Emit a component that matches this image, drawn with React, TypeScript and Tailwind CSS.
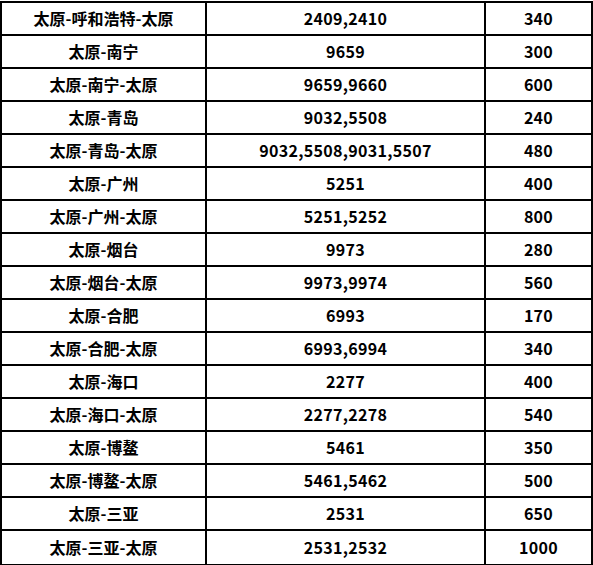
const rows: [string, string, string][] = [
  ["太原-呼和浩特-太原", "2409,2410", "340"],
  ["太原-南宁", "9659", "300"],
  ["太原-南宁-太原", "9659,9660", "600"],
  ["太原-青岛", "9032,5508", "240"],
  ["太原-青岛-太原", "9032,5508,9031,5507", "480"],
  ["太原-广州", "5251", "400"],
  ["太原-广州-太原", "5251,5252", "800"],
  ["太原-烟台", "9973", "280"],
  ["太原-烟台-太原", "9973,9974", "560"],
  ["太原-合肥", "6993", "170"],
  ["太原-合肥-太原", "6993,6994", "340"],
  ["太原-海口", "2277", "400"],
  ["太原-海口-太原", "2277,2278", "540"],
  ["太原-博鳌", "5461", "350"],
  ["太原-博鳌-太原", "5461,5462", "500"],
  ["太原-三亚", "2531", "650"],
  ["太原-三亚-太原", "2531,2532", "1000"],
];

export default function App() {
  return (
    <div
      className="w-[593px] h-[565px] bg-white overflow-hidden pt-px"
      style={{ fontFamily: '"Noto Sans CJK SC", "Noto Sans", sans-serif' }}
    >
      <div className="w-[593px] border-2 border-black text-black font-bold text-[16px] leading-none">
        {rows.map(([route, trains, price], i) => (
          <div
            key={i}
            className={`flex h-[33px] ${i < rows.length - 1 ? "border-b-2 border-black" : "h-[31px]"}`}
          >
            <div className="w-[205px] border-r-2 border-black flex items-center justify-center pb-[2px]">
              {route}
            </div>
            <div className="w-[279px] border-r-2 border-black flex items-center justify-center pb-[2px] tracking-[0.3px]">
              {trains}
            </div>
            <div className="flex-1 flex items-center justify-center pb-[2px] tracking-[0.3px]">{price}</div>
          </div>
        ))}
      </div>
    </div>
  );
}
